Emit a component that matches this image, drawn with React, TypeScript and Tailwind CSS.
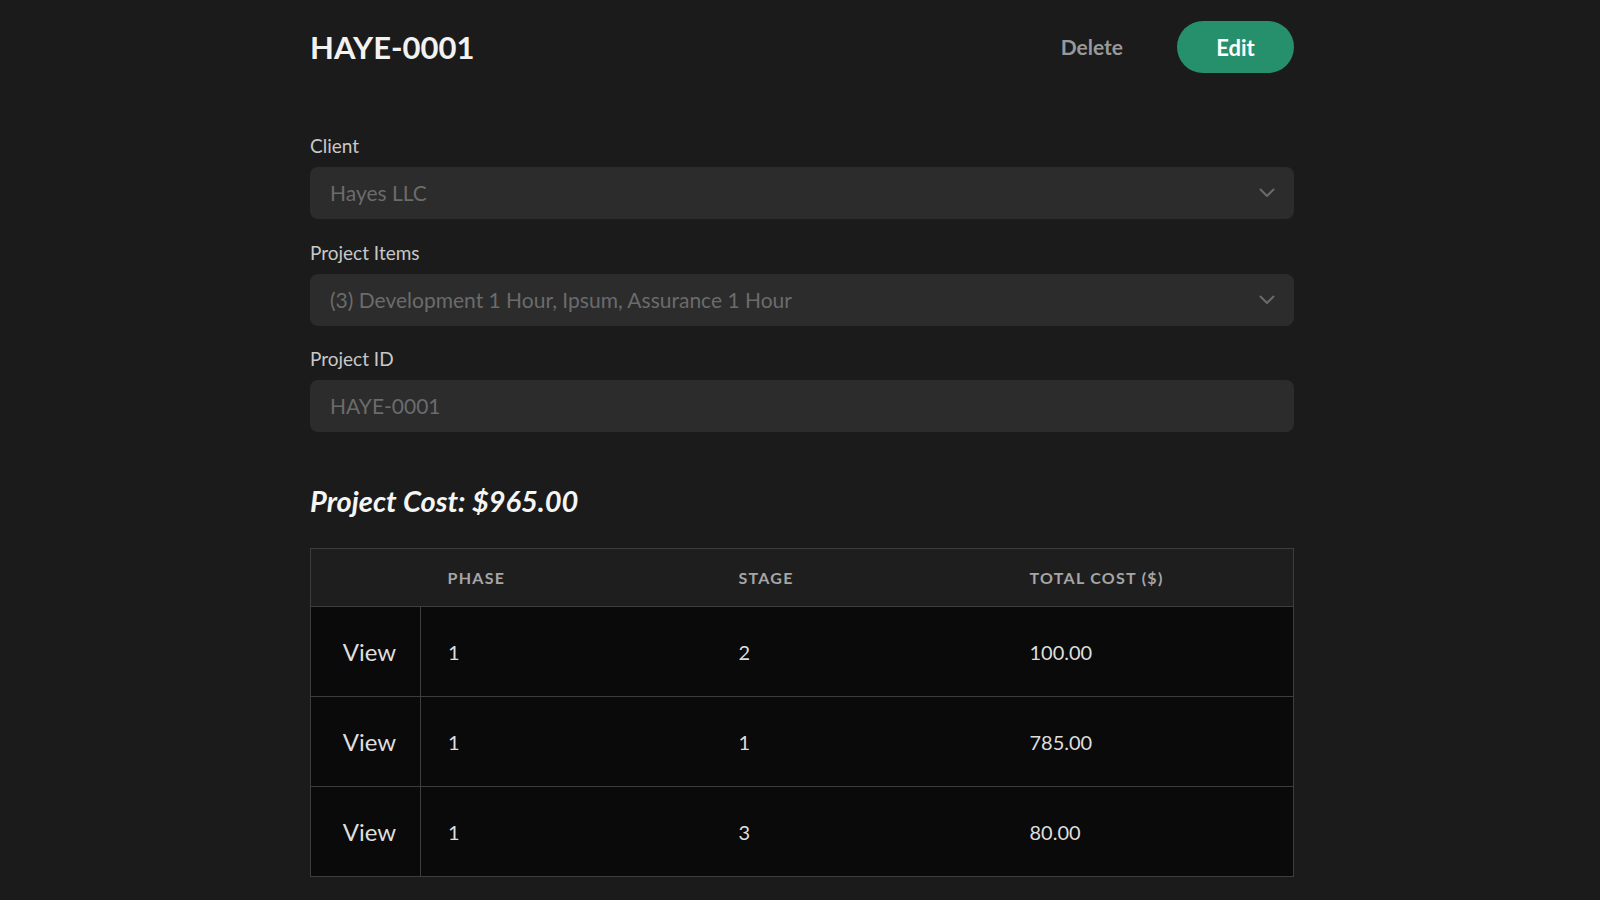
import React from 'react';

const Chevron: React.FC = () => (
  <svg width="16" height="10" viewBox="0 0 16 10" fill="none">
    <polyline points="1.5,1.5 8,8 14.5,1.5" stroke="#6a6a6a" strokeWidth="2" strokeLinecap="round" strokeLinejoin="round" />
  </svg>
);

const Field: React.FC<{ label: string; value: string; select?: boolean; className?: string }> = ({ label, value, select, className }) => (
  <div className={className}>
    <div className="text-[19px] leading-[24px] text-[#c8c8c8]">{label}</div>
    <div className="mt-[9px] h-[52px] rounded-lg bg-[#2c2c2c] flex items-center justify-between pl-5 pr-[19px]">
      <span className="text-[21px] text-[#6b6b6b]">{value}</span>
      {select && <Chevron />}
    </div>
  </div>
);

const rows = [
  { phase: '1', stage: '2', cost: '100.00' },
  { phase: '1', stage: '1', cost: '785.00' },
  { phase: '1', stage: '3', cost: '80.00' },
];

export default function App() {
  return (
    <div className="min-h-screen bg-[#1b1b1b] font-['Lato',sans-serif]">
      <div className="ml-[310px] w-[984px] pt-[21px]">
        {/* Header */}
        <div className="flex items-center justify-between h-[52px]">
          <h1 className="text-[31px] font-bold text-[#f2f2f2] leading-none">HAYE-0001</h1>
          <div className="flex items-center gap-[54px]">
            <button className="text-[21px] font-bold text-[#999999]">Delete</button>
            <button className="h-[52px] w-[117px] rounded-full bg-[#268f6b] text-[22px] font-bold text-white">Edit</button>
          </div>
        </div>

        {/* Form */}
        <Field className="mt-[61px]" label="Client" value="Hayes LLC" select />
        <Field className="mt-[22px]" label="Project Items" value="(3) Development 1 Hour, Ipsum, Assurance 1 Hour" select />
        <Field className="mt-[21px]" label="Project ID" value="HAYE-0001" />

        <h2 className="mt-[51px] text-[29px] leading-[36px] font-bold italic text-[#f5f5f5]">Project Cost: $965.00</h2>

        {/* Table */}
        <table className="mt-[29px] w-full border-collapse border border-[#3d3d3d] table-fixed">
          <thead>
            <tr className="bg-[#1e1e1e] h-[58px]">
              <th className="w-[110px]"></th>
              <th className="text-left pl-[27px] text-[16px] font-bold tracking-[0.08em] text-[#a6a6a6]">PHASE</th>
              <th className="text-left pl-[27px] text-[16px] font-bold tracking-[0.08em] text-[#a6a6a6]">STAGE</th>
              <th className="text-left pl-[27px] text-[16px] font-bold tracking-[0.08em] text-[#a6a6a6]">TOTAL COST ($)</th>
            </tr>
          </thead>
          <tbody>
            {rows.map((r, i) => (
              <tr key={i} className="bg-[#0a0a0a] h-[90px] border-t border-[#3d3d3d]">
                <td className="text-center pl-2 border-r border-[#3d3d3d] text-[24px] text-[#dedede]">View</td>
                <td className="pl-[27px] text-[20px] text-[#dedede]">{r.phase}</td>
                <td className="pl-[27px] text-[20px] text-[#dedede]">{r.stage}</td>
                <td className="pl-[27px] text-[20px] text-[#dedede]">{r.cost}</td>
              </tr>
            ))}
          </tbody>
        </table>
      </div>
    </div>
  );
}
